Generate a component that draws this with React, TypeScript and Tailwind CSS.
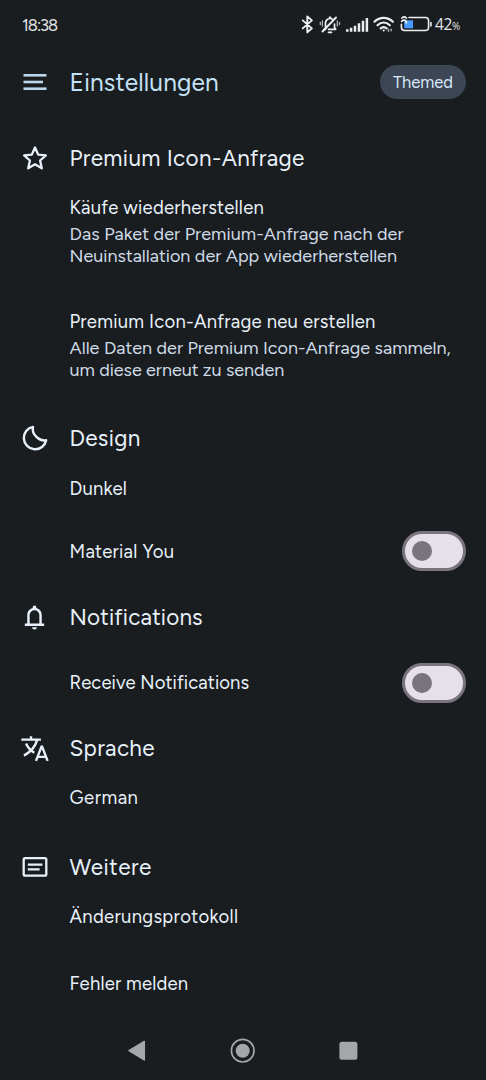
import React from 'react';

const MenuIcon = () => (
    <svg width="24" height="18" viewBox="0 0 24 18" fill="#b9d6ec">
        <rect x="0.5" y="1" width="23" height="2.6" />
        <rect x="0.5" y="7.7" width="19.5" height="2.6" />
        <rect x="0.5" y="14.4" width="23" height="2.6" />
    </svg>
);

const StarIcon = () => (
    <svg width="26" height="26" viewBox="0 0 26 26" fill="none" stroke="currentColor" strokeWidth="2.3" strokeLinejoin="round">
        <path d="M13 2.5l3.2 7.1 7.7.8-5.8 5.1 1.7 7.8-6.8-4-6.8 4 1.7-7.8-5.8-5.1 7.7-.8z" />
    </svg>
);

const MoonIcon = () => (
    <svg width="26" height="26" viewBox="0 0 26 26" fill="none" stroke="currentColor" strokeWidth="2.4" strokeLinejoin="round">
        <path d="M11 1.9A11.3 11.3 0 1 0 24.2 15.2C17.4 16.9 9.4 9.2 11 1.9Z" />
    </svg>
);

const BellIcon = () => (
    <svg width="29" height="29" viewBox="0 0 24 24" fill="currentColor" fillRule="evenodd">
        <path d="M4 19v-2h2v-7c0-2.77 1.71-5.08 4.5-5.8v-.7a1.5 1.5 0 0 1 3 0v.7c2.79.72 4.5 3.03 4.5 5.8v7h2v2zM8 17h8v-7a4 4 0 0 0-8 0z" />
        <path d="M12 22a2 2 0 0 1-2-2h4a2 2 0 0 1-2 2z" />
    </svg>
);

const LanguageIcon = () => (
    <svg width="29" height="29" viewBox="0 0 29 29" fill="none" stroke="currentColor" strokeWidth="2.4">
        <path d="M1.3 5.6h19.6M11 2.2v3.4M17.2 5.6C15.6 12.200 11 17.600 4 21.600M6 9.600c1.800 4 4.600 7 8.300 9.200" />
        <path d="M16 26.900l5.500-14.300h.6l5.500 14.300M17.800 22.900h8" />
    </svg>
);

const ArticleIcon = () => (
    <svg width="26" height="22" viewBox="0 0 26 22" fill="none" stroke="currentColor" strokeWidth="2.3">
        <rect x="1.7" y="2.1" width="22.6" height="17.6" rx="1.4" />
        <path d="M5.8 8.6h14.6M5.8 13.4h11.8" />
    </svg>
);

const StatusIcons = () => (
    <svg width="134" height="22" viewBox="300 13 134 22" fill="none" stroke="#eceeef" strokeLinecap="round" strokeLinejoin="round">
        {/* bluetooth */}
        <path d="M302.7 20.4l9.2 8-4.6 4V16.4l4.6 4-9.2 8" strokeWidth="1.9" />
        {/* silent mode */}
        <path d="M323.8 29.3h1.7v-6.3a4.5 4.5 0 0 1 7.5-3.3M334.5 24v3.5l1.2 1.8h-7.2M328.5 32.3h3M329.5 17.3h1" strokeWidth="1.7" />
        <path d="M322.5 31.5l13.5-14" strokeWidth="1.9" />
        <path d="M322.4 21v5M320.3 22.5v2M337.3 21v5M339.5 22.5v2" strokeWidth="1.3" stroke="#b0b5b8" />
        {/* mobile signal */}
        <path d="M347.3 29.3v2.4M351.1 27.7v4M355 25.7v6M359 23.3v8.4M363 20.7v11M366.9 18v13.7" strokeWidth="2.5" strokeLinecap="butt" />
        {/* wifi */}
        <path d="M374.4 21.7c5.6-5.2 12.9-5.2 18.5 0M377.5 25.2c3.8-3.5 8.5-3.5 12.3 0M380.7 28.4c1.9-1.7 4-1.7 5.9 0" strokeWidth="2.2" />
        <circle cx="383.7" cy="30.5" r="1.1" fill="#eceeef" stroke="none" />
        <path d="M388.5 29.3v2M391.2 29.3v1.5" strokeWidth="1.6" stroke="#9ba2a6" />
        {/* battery */}
        <rect x="404.2" y="20.3" width="8.8" height="8" fill="#479aff" stroke="none" />
        <path d="M409 17.5h16.3q3.3 0 3.3 3.3v6.4q0 3.3-3.3 3.3h-20.7q-3.2 0-3.2-3.2v-3" strokeWidth="1.6" />
        <path d="M431 22.7v3" strokeWidth="1.9" stroke="#c5c9cb" />
        <path d="M402 18q2.2-2.3 4.4 0M401.7 21.3q2.3-2.3 4.6 0v1.5" strokeWidth="1.8" />
    </svg>
);

const SectionHeader: React.FC<{ icon: React.ReactNode; title: string; className: string }> = ({ icon, title, className }) => (
    <div className="flex h-[50px] items-center">
        <div className="flex w-[69px] justify-center text-[#e8f1f9]">{icon}</div>
        <h2 className={`pt-0.5 pl-[0.5px] text-[22.5px] leading-7 text-[#e8f1f9] ${className}`}>{title}</h2>
    </div>
);

const Toggle = () => (
    <button role="switch" aria-checked="false" className="flex h-10 w-16 items-center rounded-full border-[3px] border-[#79747e] bg-[#e6e0e9] pl-[6.5px]">
        <span className="size-5 rounded-full bg-[#79747e]" />
    </button>
);

const itemClasses = 'text-[18.5px] leading-[26px] text-[#e8f1f9]';
const textClasses = 'text-[18px] leading-[22px] text-[#cedbe6]';

export default function App() {
    return (
        <div className="flex h-[1080px] w-[486px] flex-col overflow-hidden bg-[#1a1d20] font-['Figtree','Inter',sans-serif]">
            <div className="flex h-12 items-center justify-between pr-[25px] pl-[22px] text-[#e4e6e7]">
                <span className="pt-0.5 text-[16.5px] tracking-[-1px]">18:38</span>
                <div className="flex items-center">
                    <StatusIcons />
                    <span className="w-[27px] whitespace-nowrap pt-px pl-px font-['Open_Sans',sans-serif] text-[15.5px] tracking-[-0.4px]">42<span className="text-[10px]">%</span></span>
                </div>
            </div>

            <header className="flex h-[68px] items-center pr-5">
                <div className="flex w-[69px] justify-center"><MenuIcon /></div>
                <h1 className="flex-1 pt-0.5 pl-[0.5px] text-[24.5px] tracking-[0.15px] text-[#c4e2f7]">Einstellungen</h1>
                <button className="h-[34px] w-[86px] rounded-full bg-[#3c4655] text-[16.5px] text-[#d7e8fa]">Themed</button>
            </header>

            <main className="flex flex-col pt-[17px]">
                <SectionHeader icon={<StarIcon />} title="Premium Icon-Anfrage" className="tracking-[0.34px]" />
                <div className="h-[114px] pt-3 pl-[69.5px]">
                    <p className={`${itemClasses} tracking-[0.23px]`}>Käufe wiederherstellen</p>
                    <p className={`${textClasses} mt-0.5`}>
                        <span className="block tracking-[0.06px]">Das Paket der Premium-Anfrage nach der</span>
                        <span className="block">Neuinstallation der App wiederherstellen</span>
                    </p>
                </div>
                <div className="h-[116px] pt-3 pl-[69.5px]">
                    <p className={`${itemClasses} tracking-[0.23px]`}>Premium Icon-Anfrage neu erstellen</p>
                    <p className={`${textClasses} mt-0.5`}>
                        <span className="block">Alle Daten der Premium Icon-Anfrage sammeln,</span>
                        <span className="block tracking-[-0.05px]">um diese erneut zu senden</span>
                    </p>
                </div>

                <SectionHeader icon={<MoonIcon />} title="Design" className="tracking-[0.3px]" />
                <div className="flex h-[50px] items-center pl-[69.5px]">
                    <p className={`${itemClasses} pt-0.5 tracking-[0.2px]`}>Dunkel</p>
                </div>
                <div className="mb-[3px] flex h-[76px] items-center justify-between pr-5 pl-[69.5px]">
                    <p className={`${itemClasses} pt-0.5 tracking-[0.24px]`}>Material You</p>
                    <Toggle />
                </div>

                <SectionHeader icon={<BellIcon />} title="Notifications" className="tracking-[0.16px]" />
                <div className="flex h-[81px] items-center justify-between pr-5 pl-[69.5px]">
                    <p className={`${itemClasses} pt-px tracking-[0.08px]`}>Receive Notifications</p>
                    <Toggle />
                </div>

                <SectionHeader icon={<LanguageIcon />} title="Sprache" className="tracking-[0.3px]" />
                <div className="mb-[19px] flex h-[50px] items-center pl-[69.5px]">
                    <p className={`${itemClasses} tracking-[0.5px]`}>German</p>
                </div>

                <SectionHeader icon={<ArticleIcon />} title="Weitere" className="tracking-[0.5px]" />
                <div className="flex h-[50px] items-center pl-[69.5px]">
                    <p className={`${itemClasses} tracking-[0.3px]`}>Änderungsprotokoll</p>
                </div>
                <div className="flex h-[82px] items-center pl-[69.5px]">
                    <p className={`${itemClasses} pt-0.5 tracking-[0.18px]`}>Fehler melden</p>
                </div>
            </main>

            <nav className="flex h-[53px] items-center justify-center gap-[80px]">
                <svg width="26" height="26" viewBox="0 0 26 26" fill="#a4a6a8" stroke="#a4a6a8" strokeWidth="1.5" strokeLinejoin="round">
                    <path d="M5 12.7L20.3 3.5v18.4z" />
                </svg>
                <svg width="26" height="26" viewBox="0 0 26 26" fill="none">
                    <circle cx="12.7" cy="12.7" r="11.3" stroke="#a4a6a8" strokeWidth="1.7" />
                    <circle cx="12.7" cy="12.7" r="7" fill="#a4a6a8" />
                </svg>
                <svg width="26" height="26" viewBox="0 0 26 26" fill="#a4a6a8">
                    <rect x="3.4" y="3.8" width="18" height="18" rx="2.5" />
                </svg>
            </nav>
        </div>
    );
}
